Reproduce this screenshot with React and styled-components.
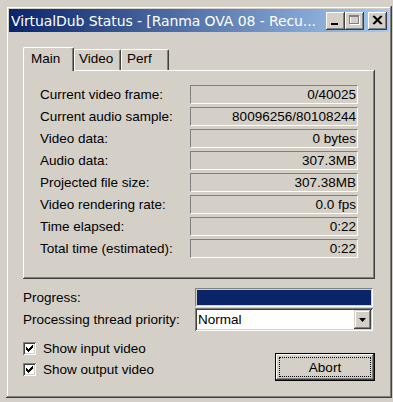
import React from 'react';
import styled, { createGlobalStyle } from 'styled-components';

const GlobalStyle = createGlobalStyle`
  html, body {
    margin: 0;
    padding: 0;
    background: #d4d0c8;
  }
  body {
    font-family: "Liberation Sans", Arial, sans-serif;
    font-size: 13.5px;
    color: #000;
  }
`;

const Window = styled.div`
  box-sizing: border-box;
  margin: 6px 0 0 6px;
  width: 386px;
  height: 392px;
  padding: 3px;
  background: #d4d0c8;
  box-shadow: inset -1px -1px #404040, inset 1px 1px #d4d0c8,
    inset -2px -2px #808080, inset 2px 2px #fff;
  display: flex;
  flex-direction: column;
`;

const TitleBar = styled.div`
  height: 23px;
  display: flex;
  align-items: center;
  padding: 0 2px 0 2px;
  background: linear-gradient(to right, #0a246a, #a6caf0);
`;

const Title = styled.div`
  flex: 1;
  color: #fff;
  font-family: "DejaVu Sans", Verdana, sans-serif;
  font-size: 14px;
  white-space: nowrap;
  overflow: hidden;
  letter-spacing: -0.1px;
`;

const CaptionButton = styled.div`
  box-sizing: border-box;
  width: 19px;
  height: 18px;
  background: #d4d0c8;
  box-shadow: inset -1px -1px #404040, inset 1px 1px #fff,
    inset -2px -2px #808080, inset 2px 2px #d4d0c8;
  margin-left: ${(p) => p.$gap || 0}px;
  display: flex;
  align-items: center;
  justify-content: center;
`;

const Body = styled.div`
  flex: 1;
  padding: 15px 13px 0 14px;
`;

const TabStrip = styled.div`
  display: flex;
  align-items: flex-end;
  height: 23px;
  position: relative;
  z-index: 1;
`;

const Tab = styled.div`
  box-sizing: border-box;
  width: ${(p) => p.$w}px;
  height: ${(p) => (p.$active ? 24 : 21)}px;
  margin-bottom: ${(p) => (p.$active ? -1 : 0)}px;
  padding-left: ${(p) => p.$pad}px;
  padding-top: ${(p) => (p.$active ? 3 : 1)}px;
  background: #d4d0c8;
  border-left: 1px solid #fff;
  border-top: 1px solid #fff;
  border-right: 1px solid #404040;
  border-top-left-radius: 2px;
  border-top-right-radius: 2px;
  box-shadow: inset -1px 0 #808080;
`;

const Panel = styled.div`
  box-sizing: border-box;
  width: 352px;
  height: 209px;
  padding: 15px 17px 0 17px;
  background: #d4d0c8;
  box-shadow: inset -1px -1px #404040, inset 1px 1px #fff,
    inset -2px -2px #808080;
  display: grid;
  grid-template-columns: 1fr 168px;
  grid-auto-rows: 19px;
  row-gap: 3px;
  align-content: start;
`;

const Label = styled.div`
  display: flex;
  align-items: center;
  white-space: nowrap;
`;

const Field = styled.div`
  box-sizing: border-box;
  border-top: 1px solid #808080;
  border-left: 1px solid #808080;
  border-bottom: 1px solid #fff;
  border-right: 1px solid #fff;
  display: flex;
  align-items: center;
  justify-content: flex-end;
  padding-right: 1px;
`;

const Controls = styled.div`
  margin-top: 9px;
  display: grid;
  grid-template-columns: 172px 178px;
  grid-template-rows: 19px 23px;
  row-gap: 1px;
`;

const Progress = styled.div`
  box-sizing: border-box;
  border-top: 1px solid #808080;
  border-left: 1px solid #808080;
  border-bottom: 1px solid #fff;
  border-right: 1px solid #fff;
  padding: 1px;
`;

const ProgressFill = styled.div`
  height: 100%;
  background: #0a246a;
`;

const Combo = styled.div`
  box-sizing: border-box;
  background: #fff;
  box-shadow: inset 1px 1px #808080, inset -1px -1px #fff,
    inset 2px 2px #404040, inset -2px -2px #d4d0c8;
  display: flex;
  align-items: center;
  padding: 2px 2px 2px 3px;
`;

const ComboText = styled.div`
  flex: 1;
`;

const DropButton = styled.div`
  box-sizing: border-box;
  width: 17px;
  height: 19px;
  background: #d4d0c8;
  box-shadow: inset -1px -1px #404040, inset 1px 1px #d4d0c8,
    inset -2px -2px #808080, inset 2px 2px #fff;
  display: flex;
  align-items: center;
  justify-content: center;
`;

const Bottom = styled.div`
  margin-top: 11px;
  display: flex;
  justify-content: space-between;
  align-items: flex-start;
`;

const Checks = styled.div`
  display: flex;
  flex-direction: column;
  gap: 8px;
`;

const CheckRow = styled.div`
  display: flex;
  align-items: center;
  gap: 7px;
  height: 13px;
`;

const CheckBox = styled.div`
  box-sizing: border-box;
  width: 13px;
  height: 13px;
  background: #fff;
  box-shadow: inset 1px 1px #808080, inset -1px -1px #fff,
    inset 2px 2px #404040, inset -2px -2px #d4d0c8;
  display: flex;
  align-items: center;
  justify-content: center;
`;

const Button = styled.div`
  box-sizing: border-box;
  margin-top: 11px;
  width: 100px;
  height: 28px;
  border: 1px solid #000;
  background: #d4d0c8;
  box-shadow: inset -1px -1px #404040, inset 1px 1px #fff,
    inset -2px -2px #808080, inset 2px 2px #d4d0c8;
  padding: 3px;
  margin-right: 1px;
`;

const FocusRect = styled.div`
  box-sizing: border-box;
  height: 100%;
  border: 1px dotted #000;
  display: flex;
  align-items: center;
  justify-content: center;
`;

const rows = [
  ['Current video frame:', '0/40025'],
  ['Current audio sample:', '80096256/80108244'],
  ['Video data:', '0 bytes'],
  ['Audio data:', '307.3MB'],
  ['Projected file size:', '307.38MB'],
  ['Video rendering rate:', '0.0 fps'],
  ['Time elapsed:', '0:22'],
  ['Total time (estimated):', '0:22'],
];

function Check() {
  return (
    <svg width="7" height="7" viewBox="0 0 7 7">
      <path d="M0 2h1v1h1v1h1v-1h1v-1h1v-1h1v-1h1v3h-1v1h-1v1h-1v1h-1v1h-1v-1h-1v-1h-1z" fill="#000" />
    </svg>
  );
}

export default function App() {
  return (
    <>
      <GlobalStyle />
      <Window>
        <TitleBar>
          <Title>VirtualDub Status - [Ranma OVA 08 - Recu...</Title>
          <CaptionButton>
            <svg width="19" height="18" viewBox="0 0 19 18">
              <rect x="5" y="11" width="7" height="2" fill="#000" />
            </svg>
          </CaptionButton>
          <CaptionButton>
            <svg width="19" height="18" viewBox="0 0 19 18">
              <rect x="5.5" y="4.5" width="9" height="8" fill="none" stroke="#fff" />
              <rect x="4.5" y="3.5" width="9" height="8" fill="none" stroke="#808080" />
              <rect x="4" y="4" width="10" height="1" fill="#808080" />
            </svg>
          </CaptionButton>
          <CaptionButton $gap={4}>
            <svg width="19" height="18" viewBox="0 0 19 18">
              <path d="M5 4 L13 12 M6 4 L14 12 M13 4 L5 12 M14 4 L6 12" stroke="#000" strokeWidth="1.3" />
            </svg>
          </CaptionButton>
        </TitleBar>
        <Body>
          <TabStrip>
            <Tab $active $w={51} $pad={7}>Main</Tab>
            <Tab $w={47} $pad={4}>Video</Tab>
            <Tab $w={48} $pad={5}>Perf</Tab>
          </TabStrip>
          <Panel>
            {rows.map(([label, value]) => (
              <React.Fragment key={label}>
                <Label>{label}</Label>
                <Field>{value}</Field>
              </React.Fragment>
            ))}
          </Panel>
          <Controls>
            <Label>Progress:</Label>
            <Progress>
              <ProgressFill />
            </Progress>
            <Label>Processing thread priority:</Label>
            <Combo>
              <ComboText>Normal</ComboText>
              <DropButton>
                <svg width="7" height="4" viewBox="0 0 7 4">
                  <path d="M0 0h7l-3.5 4z" fill="#000" />
                </svg>
              </DropButton>
            </Combo>
          </Controls>
          <Bottom>
            <Checks>
              <CheckRow>
                <CheckBox><Check /></CheckBox>
                Show input video
              </CheckRow>
              <CheckRow>
                <CheckBox><Check /></CheckBox>
                Show output video
              </CheckRow>
            </Checks>
            <Button>
              <FocusRect>Abort</FocusRect>
            </Button>
          </Bottom>
        </Body>
      </Window>
    </>
  );
}
